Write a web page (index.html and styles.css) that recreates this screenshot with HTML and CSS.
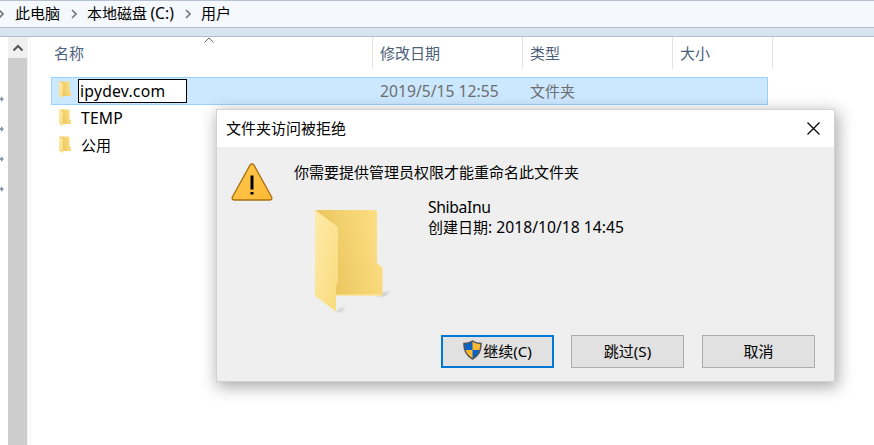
FILE: index.html
```html
<!DOCTYPE html>
<html lang="zh-CN">
<head>
<meta charset="utf-8">
<title>用户</title>
<link rel="stylesheet" href="styles.css">
</head>
<body>
<svg class="defs" aria-hidden="true">
  <defs>
    <linearGradient id="back" x1="0" x2="1" y1=".3" y2="0"><stop offset="0" stop-color="#e9c45c"/><stop offset="1" stop-color="#ffe187"/></linearGradient>
    <linearGradient id="front" x1="0" x2="1" y1="0" y2="1"><stop offset="0" stop-color="#ffebaa"/><stop offset="1" stop-color="#f9db7c"/></linearGradient>
    <linearGradient id="warn" x1="0" x2="1" y1="0" y2="1"><stop offset="0" stop-color="#ffc850"/><stop offset="1" stop-color="#ffb934"/></linearGradient>
    <filter id="soft" x="-50%" y="-50%" width="200%" height="200%"><feGaussianBlur stdDeviation="1.2"/></filter>
    <symbol id="folder" viewBox="0 0 12 17"><path d="M0 .5H10.5V10L12 11.5V15H0z" fill="url(#back)"/><path d="M0 .5L4 3V17L0 15z" fill="url(#front)"/></symbol>
    <symbol id="chevron" viewBox="0 0 6 10"><path d="M1 1l4 4-4 4" fill="none" stroke="#777" stroke-width="1.6"/></symbol>
    <symbol id="pin" viewBox="0 0 4 8"><path d="M0 3h1V1l3 3-3 3V5H0z" fill="#8d99a6"/></symbol>
  </defs>
</svg>
<nav class="crumbs">
  <svg class="chev"><use href="#chevron"/></svg><span class="c1">此电脑</span>
  <svg class="chev"><use href="#chevron"/></svg><span class="c2">本地磁盘 <span class="lat">(C:)</span></span>
  <svg class="chev"><use href="#chevron"/></svg><span>用户</span>
</nav>
<div class="strip"></div>
<main>
  <aside class="pins"><svg><use href="#pin"/></svg><svg><use href="#pin"/></svg><svg><use href="#pin"/></svg><svg><use href="#pin"/></svg></aside>
  <div class="scroll"><div class="up"><svg width="12" height="8" viewBox="0 0 12 8"><path d="M1.5 6.5L6 2l4.5 4.5" fill="none" stroke="#555" stroke-width="2"/></svg></div></div>
  <section class="files">
    <header class="head"><div>名称<svg class="sort" viewBox="0 0 10 6"><path d="M.5 5.5L5 1l4.500 4.500" fill="none" stroke="#666"/></svg></div><div>修改日期</div><div>类型</div><div>大小</div></header>
    <div class="row sel"><div class="name"><svg class="fi"><use href="#folder"/></svg><span class="edit lat">ipydev.com</span></div><div class="lat">2019/5/15 12:55</div><div>文件夹</div></div>
    <div class="row"><div class="name"><svg class="fi"><use href="#folder"/></svg><span class="label lat temp">TEMP</span></div></div>
    <div class="row"><div class="name"><svg class="fi"><use href="#folder"/></svg><span class="label">公用</span></div></div>
  </section>
</main>
<div class="dialog">
  <div class="title"><span>文件夹访问被拒绝</span><svg width="13" height="13" viewBox="0 0 13 13"><path d="M.5.5l12 12M12.500.5l-12 12" stroke="#000" stroke-width="1.200"/></svg></div>
  <div class="body">
    <svg class="warn" viewBox="0 0 42 38"><path d="M19 2.200Q21 -.2 23 2.200L40.600 34Q41.500 36.800 39 37H3Q.5 36.800 1.400 34z" fill="url(#warn)" stroke="#a9700f" stroke-width="1.300"/><path d="M19.500 12.500h3v14h-3zM19.500 29h3v2.500h-3z" fill="#000"/></svg>
    <div class="content">
      <div class="msg">你需要提供管理员权限才能重命名此文件夹</div>
      <div class="item">
        <svg class="big" viewBox="0 0 80 106"><g fill="#888" opacity=".5" filter="url(#soft)"><path d="M60 86l16-5-7 5zM20 102l10-5-3 4z"/></g><path d="M0 0H61L62 1V53L67.500 58V85.500H0z" fill="url(#back)"/><path d="M0 0L23 17V72L21 76V101.500L0 86z" fill="url(#front)"/><path d="M21 85H67" stroke="#ffe8a5"/></svg>
        <div class="info"><div class="lat shiba">ShibaInu</div><div>创建日期<span class="lat">: 2018/10/18 14:45</span></div></div>
      </div>
    </div>
    <div class="buttons">
      <button class="primary"><svg class="shield" viewBox="0 0 19 20"><path d="M9.500 1Q6 3.500 1 3.500Q.5 14 9.500 19Q18.500 14 18 3.500Q13 3.500 9.500 1z" fill="#fbb731"/><path d="M9.500 1Q6 3.500 1 3.500L1.300 10H9.500zM9.500 10h8.200Q16.500 15.500 9.500 19z" fill="#0863c5"/><path d="M9.500 1Q6 3.500 1 3.500Q.5 14 9.500 19Q18.500 14 18 3.500Q13 3.500 9.500 1z" fill="none" stroke="#555" stroke-width="1.500"/></svg><span>继续<span class="lat">(C)</span></span></button>
      <button><span>跳过<span class="lat">(S)</span></span></button>
      <button class="cancel"><span>取消</span></button>
    </div>
  </div>
</div>
</body>
</html>
```
FILE: styles.css
```css
* { box-sizing: border-box; }
body { margin: 0; width: 874px; height: 445px; overflow: hidden; background: #fff; color: #000; font: 15px/20px "Noto Sans CJK SC", sans-serif; display: flex; flex-direction: column; }
svg { display: block; flex: none; }
.defs { position: absolute; width: 0; height: 0; }
.lat { font-family: "Noto Sans", sans-serif; font-size: 15.7px; }
.crumbs { flex: none; height: 28px; border-top: 1px solid #b5c3d4; border-bottom: 1px solid #b5bfcd; background: #f5f8fc; display: flex; align-items: center; white-space: nowrap; }
.crumbs > span { margin-top: -2px; }
.chev { width: 6px; height: 10px; margin: 0 10px 0 11px; }
.chev:first-child { margin-left: -2px; margin-right: 11px; }
.c2 .lat { font-size: 15.7px; }
.strip { flex: none; height: 9px; background: #d7e4f2; border-bottom: 1px solid #b1bfd0; }
main { flex: 1; display: flex; }
.pins { width: 8px; padding-top: 58px; display: flex; flex-direction: column; gap: 22px; }
.pins svg { width: 4px; height: 8px; }
.scroll { width: 20px; background: #cdcdcd; border-right: 1px solid #f0f0f0; }
.up { height: 21px; background: #f0f0f0; display: flex; align-items: center; justify-content: center; }
.files { flex: 1; margin-left: 2px; border-left: 1px solid #f3f3f3; padding-left: 20px; }
.head { display: grid; grid-template-columns: 322px 150px 150px 100px; height: 32px; margin-bottom: 8px; color: #4c607a; }
.head > div { border-right: 1px solid #e3e3e3; padding: 6px 0 0 7px; position: relative; }
.head > div:first-child { padding-left: 3px; }
.sort { position: absolute; left: 153px; top: 0; width: 10px; height: 6px; }
.row { height: 27px; width: 717px; display: grid; grid-template-columns: 329px 150px 1fr; align-items: center; color: #6d6d6d; }
.row.sel { height: 28px; background: #cce8ff; box-shadow: inset 0 0 0 1px #99d1ff; }
.name { display: flex; align-items: center; color: #000; padding-left: 8px; }
.fi { width: 12px; height: 17px; margin-top: -3px; }
.edit { width: 109px; height: 24px; margin-left: 7px; padding-left: 1px; border: 1px solid #000; background: #fff; line-height: 22px; letter-spacing: .25px; }
.label { margin: -2px 0 0 10px; }
.temp { letter-spacing: .2px; }
.dialog { position: absolute; left: 216px; top: 109px; width: 619px; height: 273px; border: 1px solid #d2d2d2; background: #efefef; box-shadow: 2px 4px 15px 1px rgba(0,0,0,.34); display: flex; flex-direction: column; }
.title { height: 37px; background: #fff; padding: 0 14px 0 9px; display: flex; align-items: center; justify-content: space-between; }
.title span { margin-top: -2px; }
.body { flex: 1; display: grid; grid-template-columns: 77px 1fr; grid-template-rows: 1fr auto; }
.warn { width: 42px; height: 38px; margin: 16px 0 0 13.5px; }
.msg { margin-top: 15px; }
.item { display: flex; margin-top: 28px; }
.big { width: 80px; height: 106px; margin-left: 21px; }
.info { margin: -13px 0 0 33px; }
.info > div { height: 20px; line-height: 20px; white-space: nowrap; }
.shiba { letter-spacing: -.35px; }
.buttons { grid-column: 1 / 3; display: flex; justify-content: flex-end; gap: 17px; padding: 0 19px 13px 0; }
button { width: 113px; height: 33px; padding: 0; border: 1px solid #adadad; background: #e1e1e1; color: #000; font: inherit; display: flex; align-items: center; justify-content: center; }
button > span { margin-top: -2px; }
button .lat { font-size: 15.2px; }
.cancel { margin-left: 1px; }
.primary { border: 2px solid #0078d7; }
.shield { width: 19px; height: 20px; margin: -3px 1px 0 0; }
```
